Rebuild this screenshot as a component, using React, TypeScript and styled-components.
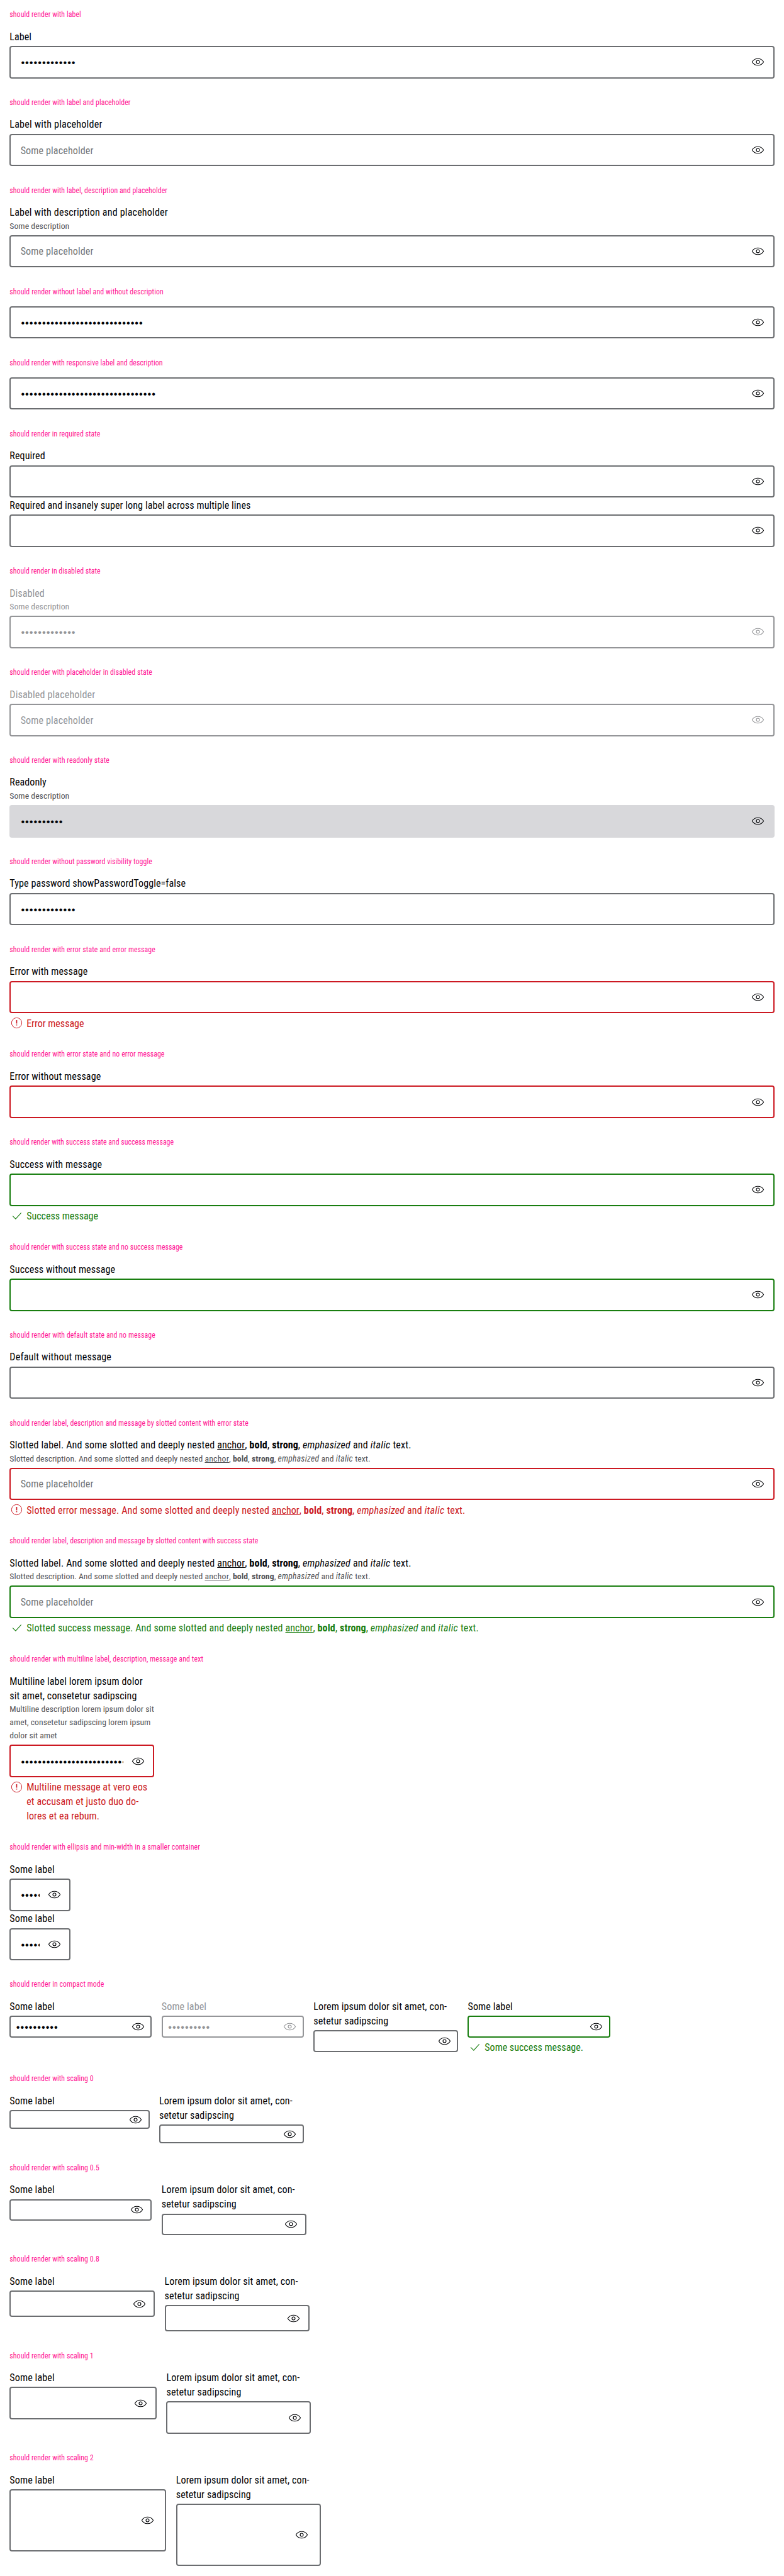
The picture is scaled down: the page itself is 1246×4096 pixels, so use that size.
import React from "react";
import styled, { createGlobalStyle, css } from "styled-components";

const SCALE = 4096 / 4275;
const u = (n: number) => `${(n * SCALE).toFixed(3)}px`;

const color = {
  primary: "#010205",
  medium: "#535457",
  border: "#6b6d70",
  disabled: "#949598",
  placeholder: "#757575",
  readonly: "#d8d8db",
  error: "#cc1922",
  success: "#197e10",
  heading: "#ff1493",
};

type State = "none" | "error" | "success";

const GlobalStyle = createGlobalStyle`
  *, *::before, *::after { box-sizing: border-box; }
  body {
    margin: 0;
    background: #fff;
    color: ${color.primary};
    font-family: Roboto, "Liberation Sans", sans-serif;
    font-stretch: 75%;
    font-size: ${u(16.8)};
    line-height: ${u(24)};
    letter-spacing: 0.12px;
  }
`;

const Page = styled.main`
  display: flex;
  flex-direction: column;
  width: 100%;
`;

const Section = styled.section`
  display: flex;
  flex-direction: column;
  padding: ${u(16)};
`;

const Heading = styled.h2<{ $tracking?: number }>`
  margin: ${u(0.6)} 0 ${u(15.4)};
  font-size: ${u(12.4)};
  line-height: ${u(16)};
  font-weight: 400;
  letter-spacing: ${(p) => p.$tracking ?? 0.07}px;
  color: ${color.heading};
`;

const Row = styled.div`
  display: flex;
  align-items: flex-start;
  gap: ${u(16)};
`;

const Field = styled.div<{ $width?: number }>`
  display: flex;
  flex-direction: column;
  width: ${(p) => (p.$width ? u(p.$width) : "100%")};
`;

const Label = styled.label<{ $disabled?: boolean; $tracking?: number }>`
  margin: ${u(0.6)} 0 ${u(-0.6)};
  white-space: nowrap;
  letter-spacing: ${(p) => p.$tracking ?? 0.11}px;
  color: ${(p) => (p.$disabled ? color.disabled : color.primary)};
`;

const Rich = styled.span`
  a {
    color: inherit;
    text-decoration: underline;
    letter-spacing: 0.04px;
  }
  strong {
    letter-spacing: 0.05px;
  }
  em {
    letter-spacing: 0.18px;
  }
  i {
    letter-spacing: 0.3px;
  }
`;

const Description = styled.span<{ $disabled?: boolean }>`
  font-size: ${u(14.3)};
  line-height: ${u(22)};
  letter-spacing: 0.035px;
  white-space: nowrap;
  color: ${(p) => (p.$disabled ? color.disabled : color.medium)};

  ${Rich} a,
  ${Rich} em {
    letter-spacing: 0.25px;
  }
  ${Rich} strong {
    letter-spacing: 0.1px;
  }
`;

const stateColor = (s: State) =>
  s === "error" ? color.error : s === "success" ? color.success : color.border;

const Control = styled.div<{
  $state: State;
  $disabled?: boolean;
  $readonly?: boolean;
  $height: number;
  $start: number;
  $end: number;
  $bare?: boolean;
}>`
  display: flex;
  align-items: center;
  gap: ${u(12)};
  height: ${(p) => u(p.$height)};
  margin-top: ${(p) => (p.$bare ? 0 : u(4))};
  padding: 0 ${(p) => u(p.$end)} 0 ${(p) => u(p.$start)};
  border: 2px solid ${(p) => stateColor(p.$state)};
  border-radius: 4px;
  color: ${color.primary};
  ${(p) =>
    p.$disabled &&
    css`
      border-color: ${color.disabled};
      color: ${color.disabled};
    `}
  ${(p) =>
    p.$readonly &&
    css`
      border-color: ${color.readonly};
      background: ${color.readonly};
    `}
`;

const Value = styled.span`
  flex: 1;
  min-width: 0;
  overflow: hidden;
  white-space: nowrap;
`;

const Dots = styled(Value)`
  padding: ${u(2)} 0 0 ${u(0.8)};
  font-family: "Liberation Sans", Arial, sans-serif;
  font-size: ${u(17)};
  letter-spacing: ${u(1.05)};
`;

const Placeholder = styled(Value)<{ $disabled?: boolean }>`
  padding-top: ${u(1)};
  color: ${(p) => (p.$disabled ? color.disabled : color.placeholder)};
`;

const Icon = styled.svg`
  flex: none;
  display: block;
  width: ${u(24)};
  height: ${u(24)};
`;

const Message = styled.div<{ $state: State; $tracking?: number }>`
  display: flex;
  align-items: flex-start;
  gap: ${u(4)};
  margin-top: ${u(4)};
  white-space: nowrap;
  letter-spacing: ${(p) => p.$tracking ?? 0.09}px;
  color: ${(p) => stateColor(p.$state)};
`;

const MessageText = styled.span`
  margin: ${u(0.6)} 0 ${u(-0.6)};
`;

const EyeIcon = () => (
  <Icon viewBox="0 0 24 24" fill="none" stroke="currentColor" strokeWidth="1.1" strokeLinejoin="round">
    <path d="M2.5 12C4.6 8.3 8 6.5 12 6.5s7.4 1.8 9.5 5.5c-2.1 3.7-5.5 5.5-9.5 5.5S4.600 15.700 2.500 12Z" />
    <circle cx="12" cy="12" r="2.55" strokeWidth="1.2" />
  </Icon>
);

const ErrorIcon = () => (
  <Icon viewBox="0 0 24 24" fill="none">
    <circle cx="12" cy="12" r="8.5" stroke="currentColor" />
    <path d="M11.150 7.300h1.700V13h-1.700zM11.150 14.600h1.700v1.700h-1.700z" fill="currentColor" />
  </Icon>
);

const CheckIcon = () => (
  <Icon viewBox="0 0 24 24" fill="none" stroke="currentColor" strokeWidth="1.1">
    <path d="M5.300 11.900 10.300 16.900 19.500 6.700" />
  </Icon>
);

interface PasswordProps {
  label?: React.ReactNode;
  description?: React.ReactNode;
  placeholder?: string;
  dots?: number;
  state?: State;
  message?: React.ReactNode;
  disabled?: boolean;
  readonly?: boolean;
  toggle?: boolean;
  width?: number;
  height?: number;
  start?: number;
  end?: number;
  tracking?: number;
  messageTracking?: number;
}

const Password = ({
  label,
  description,
  placeholder,
  dots = 0,
  state = "none",
  message,
  disabled,
  readonly,
  toggle = true,
  width,
  height = 54,
  start = 16,
  end = 13,
  tracking,
  messageTracking,
}: PasswordProps) => (
  <Field $width={width}>
    {label && (
      <Label $disabled={disabled} $tracking={tracking}>
        {label}
      </Label>
    )}
    {description && <Description $disabled={disabled}>{description}</Description>}
    <Control
      $state={state}
      $disabled={disabled}
      $readonly={readonly}
      $height={height}
      $start={start}
      $end={end}
      $bare={!label}
    >
      {placeholder ? (
        <Placeholder $disabled={disabled}>{placeholder}</Placeholder>
      ) : (
        <Dots>{"•".repeat(dots)}</Dots>
      )}
      {toggle && <EyeIcon />}
    </Control>
    {message && (
      <Message $state={state} $tracking={messageTracking}>
        {state === "error" ? <ErrorIcon /> : <CheckIcon />}
        <MessageText>{message}</MessageText>
      </Message>
    )}
  </Field>
);

const Slotted = ({ intro }: { intro: string }) => (
  <Rich>
    {intro}. And some slotted and deeply nested <a>anchor</a>, <b>bold</b>, <strong>strong</strong>,{" "}
    <em>emphasized</em> and <i>italic</i> text.
  </Rich>
);

const Case = ({
  title,
  tracking,
  children,
}: {
  title: string;
  tracking?: number;
  children: React.ReactNode;
}) => (
  <Section>
    <Heading $tracking={tracking}>should render {title}</Heading>
    {children}
  </Section>
);

const longLabel = (
  <>
    Lorem ipsum dolor sit amet, con-
    <br />
    setetur sadipscing
  </>
);

const scalings = [
  { name: "0", height: 32, end: 9, start: 8, width: 232 },
  { name: "0.5", height: 36, end: 11, start: 8, width: 236 },
  { name: "0.8", height: 44, end: 12, start: 13, width: 241 },
  { name: "1", height: 54, end: 13, start: 16, width: 244 },
  { name: "2", height: 103, end: 17, start: 32, width: 260 },
];

export default function App() {
  return (
    <Page>
      <GlobalStyle />
      <Case title="with label">
        <Password label="Label" dots={13} tracking={0.02} />
      </Case>
      <Case title="with label and placeholder">
        <Password label="Label with placeholder" placeholder="Some placeholder" tracking={0.2} />
      </Case>
      <Case title="with label, description and placeholder">
        <Password
          label="Label with description and placeholder"
          description="Some description"
          placeholder="Some placeholder"
          tracking={0.18}
        />
      </Case>
      <Case title="without label and without description" tracking={0.09}>
        <Password dots={29} />
      </Case>
      <Case title="with responsive label and description" tracking={0.05}>
        <Password dots={32} />
      </Case>
      <Case title="in required state" tracking={0.04}>
        <Password label="Required" tracking={0.07} />
        <Password label="Required and insanely super long label across multiple lines" tracking={0.08} />
      </Case>
      <Case title="in disabled state" tracking={0}>
        <Password label="Disabled" description="Some description" dots={13} disabled tracking={0.05} />
      </Case>
      <Case title="with placeholder in disabled state" tracking={0.05}>
        <Password label="Disabled placeholder" placeholder="Some placeholder" disabled tracking={0.15} />
      </Case>
      <Case title="with readonly state" tracking={0.09}>
        <Password label="Readonly" description="Some description" dots={10} readonly tracking={0.06} />
      </Case>
      <Case title="without password visibility toggle">
        <Password label="Type password showPasswordToggle=false" dots={13} toggle={false} tracking={0.08} />
      </Case>
      <Case title="with error state and error message">
        <Password label="Error with message" state="error" message="Error message" messageTracking={-0.03} />
      </Case>
      <Case title="with error state and no error message">
        <Password label="Error without message" state="error" />
      </Case>
      <Case title="with success state and success message" tracking={0}>
        <Password label="Success with message" state="success" message="Success message" messageTracking={-0.03} />
      </Case>
      <Case title="with success state and no success message" tracking={0}>
        <Password label="Success without message" state="success" />
      </Case>
      <Case title="with default state and no message">
        <Password label="Default without message" tracking={0.17} />
      </Case>
      <Case title="label, description and message by slotted content with error state" tracking={0.08}>
        <Password
          label={<Slotted intro="Slotted label" />}
          description={<Slotted intro="Slotted description" />}
          placeholder="Some placeholder"
          state="error"
          message={<Slotted intro="Slotted error message" />}
          tracking={0.17}
          messageTracking={0.13}
        />
      </Case>
      <Case title="label, description and message by slotted content with success state">
        <Password
          label={<Slotted intro="Slotted label" />}
          description={<Slotted intro="Slotted description" />}
          placeholder="Some placeholder"
          state="success"
          message={<Slotted intro="Slotted success message" />}
          tracking={0.17}
          messageTracking={0.12}
        />
      </Case>
      <Case title="with multiline label, description, message and text" tracking={0.11}>
        <Password
          width={240}
          dots={25}
          state="error"
          label={
            <>
              Multiline label lorem ipsum dolor
              <br />
              sit amet, consetetur sadipscing
            </>
          }
          description={
            <>
              Multiline description lorem ipsum dolor sit
              <br />
              amet, consetetur sadipscing lorem ipsum
              <br />
              dolor sit amet
            </>
          }
          message={
            <>
              Multiline message at vero eos
              <br />
              et accusam et justo duo do-
              <br />
              lores et ea rebum.
            </>
          }
        />
      </Case>
      <Case title="with ellipsis and min-width in a smaller container" tracking={0.12}>
        <Password label="Some label" dots={5} width={101} />
        <Password label="Some label" dots={5} width={101} />
      </Case>
      <Case title="in compact mode">
        <Row>
          <Password label="Some label" dots={10} width={236} height={36} start={8} end={9} />
          <Password label="Some label" dots={10} width={236} height={36} start={8} end={9} disabled />
          <Password label={longLabel} width={240} height={36} start={8} end={9} />
          <Password
            label="Some label"
            width={236}
            height={36}
            start={8}
            end={9}
            state="success"
            message="Some success message."
            messageTracking={-0.03}
          />
        </Row>
      </Case>
      {scalings.map((s) => (
        <Case key={s.name} title={`with scaling ${s.name}`}>
          <Row>
            <Password label="Some label" width={s.width} height={s.height} start={s.start} end={s.end} />
            <Password label={longLabel} width={240} height={s.height} start={s.start} end={s.end} />
          </Row>
        </Case>
      ))}
    </Page>
  );
}
